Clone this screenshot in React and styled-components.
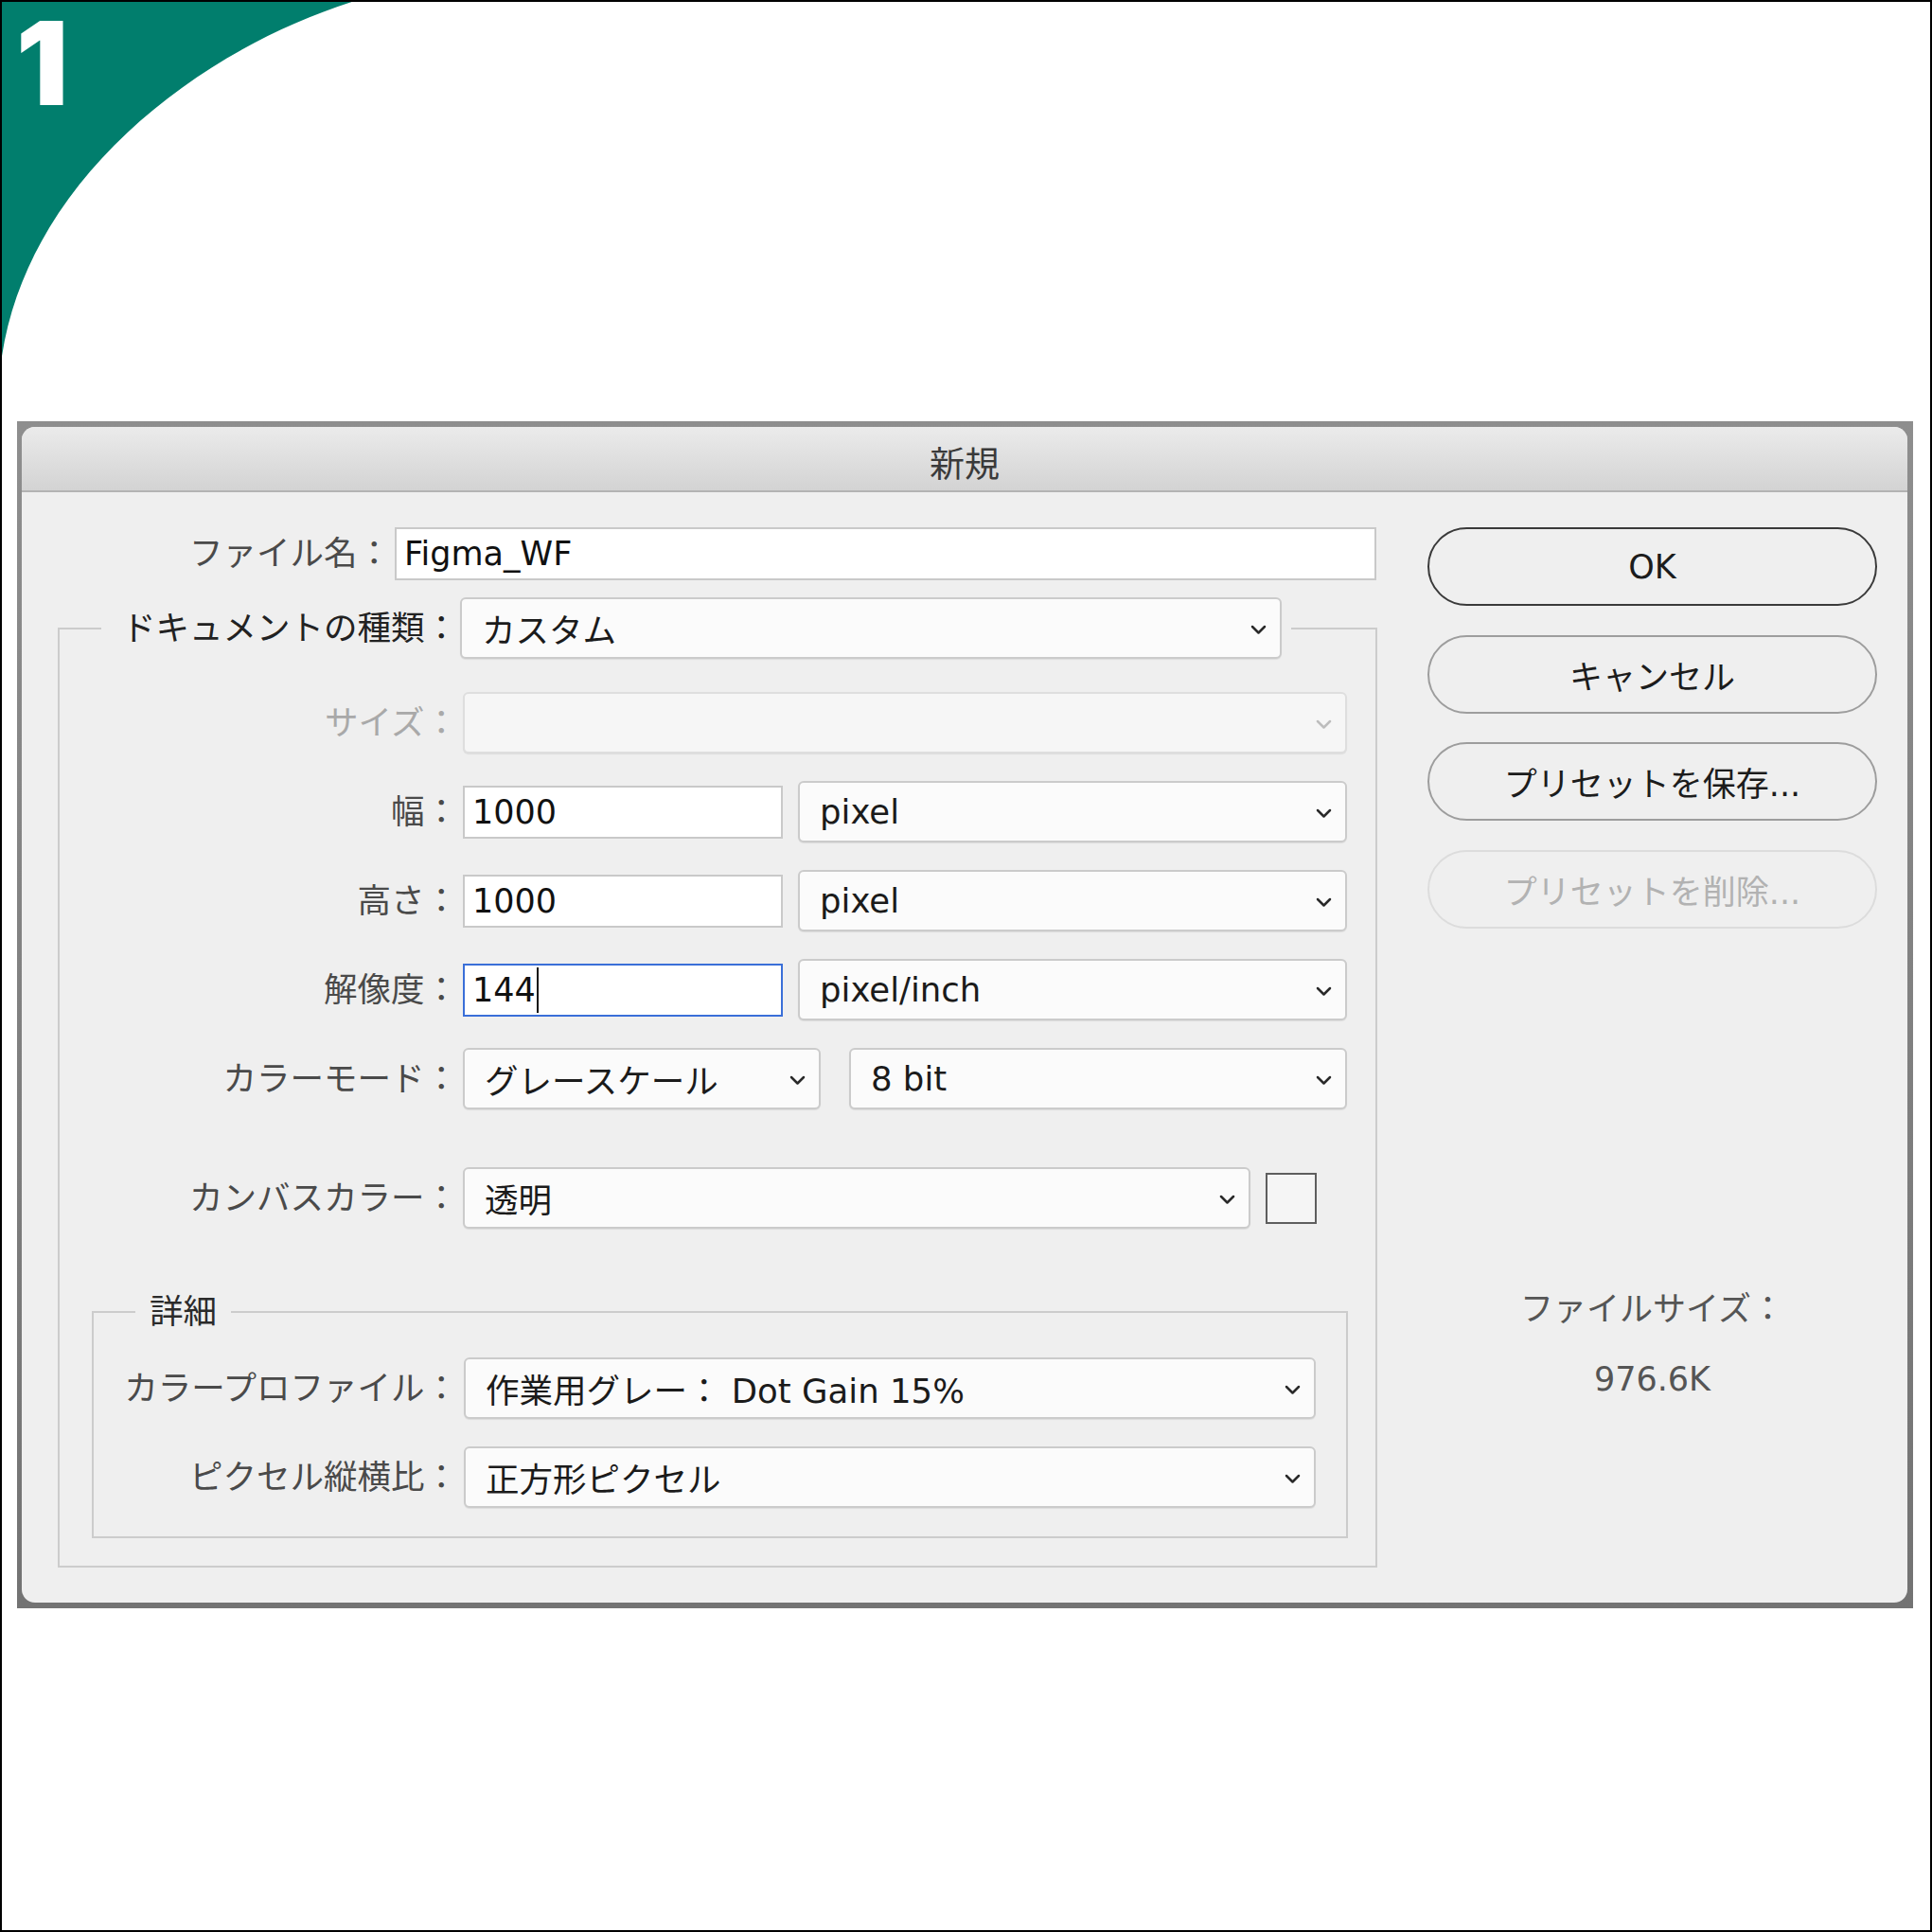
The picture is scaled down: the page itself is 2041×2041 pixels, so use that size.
import React from 'react';
import styled, { createGlobalStyle } from 'styled-components';

const GlobalStyle = createGlobalStyle`
  html, body { margin: 0; padding: 0; background: #fff; }
  body { font-family: "DejaVu Sans", "Noto Sans CJK JP", sans-serif; }
  * { box-sizing: border-box; }
`;

const Page = styled.div`
  position: relative;
  width: 2041px;
  height: 2041px;
  border: 2px solid #000;
  background: #fff;
  padding: 443px 18px 0 16px;
  overflow: hidden;
`;

const Corner = styled.svg`
  position: absolute;
  top: -2px;
  left: -2px;
  width: 400px;
  height: 400px;
  display: block;
`;

const StepNumber = styled.span`
  position: absolute;
  top: 20px;
  left: 15px;
  font-family: Inter, sans-serif;
  font-weight: 900;
  font-size: 122px;
  line-height: 90px;
  color: #fff;
`;

const Frame = styled.div`
  height: 1254px;
  padding: 6px 6px 6px 5px;
  background: linear-gradient(#8e8e8e, #737373);
`;

const Window = styled.div`
  height: 100%;
  border-radius: 14px;
  background: #efefef;
  overflow: hidden;
  display: flex;
  flex-direction: column;
`;

const TitleBar = styled.div`
  flex: none;
  height: 69px;
  display: flex;
  align-items: center;
  justify-content: center;
  padding-top: 6px;
  background: linear-gradient(#ebebeb, #d3d3d3);
  border-bottom: 2px solid #b3b3b3;
  font-size: 37px;
  color: #3a3a3a;
`;

const Body = styled.div`
  flex: 1;
  display: flex;
  gap: 53px;
  padding: 37px 32px 0 38px;
`;

const LeftColumn = styled.div`
  width: 1394px;
  display: flex;
  flex-direction: column;
`;

const RightColumn = styled.div`
  width: 475px;
  display: flex;
  flex-direction: column;
  gap: 30.5px;
`;

const Row = styled.div`
  display: flex;
  align-items: center;
  height: ${p => p.$h || 65}px;
  margin-top: ${p => p.$mt || 0}px;
`;

const Label = styled.span`
  flex: none;
  width: ${p => p.$w}px;
  margin-right: ${p => p.$gap ?? 5}px;
  text-align: right;
  font-size: 35.5px;
  line-height: 44px;
  white-space: nowrap;
  color: ${p => (p.$disabled ? '#a9a9a9' : p.$strong ? '#222' : '#4a4a4a')};
`;

const TextField = styled.div`
  flex: none;
  width: ${p => p.$w}px;
  height: 56px;
  display: flex;
  align-items: center;
  padding-left: 8px;
  background: #fff;
  border: 2px solid ${p => (p.$focused ? '#3a6fd8' : '#c9c9c9')};
  font-size: 35px;
  color: #111;
  white-space: nowrap;
`;

const Caret = styled.span`
  display: inline-block;
  width: 2px;
  height: 48px;
  margin-left: 1px;
  background: #111;
`;

const SelectBox = styled.div`
  flex: ${p => (p.$w ? 'none' : '1')};
  width: ${p => (p.$w ? `${p.$w}px` : 'auto')};
  height: 65px;
  display: flex;
  align-items: center;
  justify-content: space-between;
  padding: 0 14px 0 21px;
  background: ${p => (p.$disabled ? '#f6f6f6' : '#fbfbfb')};
  border: 2px solid ${p => (p.$disabled ? '#dedede' : '#cbcbcb')};
  border-radius: 6px;
  box-shadow: 0 1px 1px rgba(0, 0, 0, 0.08);
  font-size: 35.5px;
  color: #1b1b1b;
  white-space: nowrap;
`;

const ChevronIcon = styled.svg`
  flex: none;
  width: 17px;
  height: 11px;
  margin-top: 4px;
  fill: none;
  stroke: ${p => (p.$disabled ? '#bdbdbd' : '#2a2a2a')};
  stroke-width: 2.5;
  stroke-linecap: round;
  stroke-linejoin: round;
`;

const Group = styled.fieldset`
  margin: ${p => p.$mt || 0}px 0 0 ${p => p.$ml || 0}px;
  width: ${p => p.$w}px;
  min-inline-size: 0;
  border: 2px solid #cccccc;
  padding: ${p => p.$pad};
`;

const GroupLegend = styled.legend`
  margin-left: ${p => p.$ml}px;
  padding: ${p => p.$pad};
`;

const LegendRow = styled.div`
  display: flex;
  align-items: center;
  height: ${p => p.$h}px;
`;

const LegendText = styled.span`
  font-size: 35.5px;
  line-height: 44px;
  color: #2b2b2b;
`;

const Rows = styled.div`
  display: flex;
  flex-direction: column;
  gap: ${p => p.$gap}px;
`;

const Controls = styled.div`
  flex: 1;
  display: flex;
  align-items: center;
  gap: ${p => p.$gap || 16}px;
`;

const Swatch = styled.div`
  flex: none;
  width: 54px;
  height: 54px;
  border: 2px solid #5e5e5e;
  background: #f5f5f5;
`;

const Button = styled.div`
  height: 83px;
  border-radius: 42px;
  display: flex;
  align-items: center;
  justify-content: center;
  border: 2px solid
    ${p => (p.$kind === 'default' ? '#3a3a3a' : p.$kind === 'disabled' ? '#dcdcdc' : '#9d9d9d')};
  font-size: 35px;
  color: ${p => (p.$kind === 'disabled' ? '#b2b2b2' : '#1c1c1c')};
`;

const FileInfo = styled.div`
  margin-top: 350px;
  display: flex;
  flex-direction: column;
  align-items: center;
  gap: 30px;
  font-size: 35px;
  line-height: 44px;
  color: #555;
`;

function Chevron({ disabled }) {
  return (
    <ChevronIcon viewBox="0 0 17 11" $disabled={disabled}>
      <polyline points="2,2 8.5,8.5 15,2" />
    </ChevronIcon>
  );
}

function Select({ value, w, disabled }) {
  return (
    <SelectBox $w={w} $disabled={disabled}>
      <span>{value}</span>
      <Chevron disabled={disabled} />
    </SelectBox>
  );
}

export default function App() {
  return (
    <>
      <GlobalStyle />
      <Page>
        <Corner viewBox="0 0 400 400">
          <path d="M0 0 H378 C200 55 20 200 0 392 Z" fill="#017e6d" />
        </Corner>
        <StepNumber>1</StepNumber>

        <Frame>
          <Window>
            <TitleBar>新規</TitleBar>
            <Body>
              <LeftColumn>
                <Row $h={56}>
                  <Label $w={352} $gap={4}>ファイル名：</Label>
                  <TextField $w={1037}>Figma_WF</TextField>
                </Row>

                <Group $w={1394} $mt={18} $pad="35px 30px 29px 0">
                  <GroupLegend $ml={44} $pad="0 10px 0 0">
                    <LegendRow $h={65}>
                      <Label $w={377} $gap={2} $strong>ドキュメントの種類：</Label>
                      <Select value="カスタム" w={868} />
                    </LegendRow>
                  </GroupLegend>

                  <Rows $gap={29}>
                    <Row>
                      <Label $w={421} $disabled>サイズ：</Label>
                      <Select value="" disabled />
                    </Row>
                    <Row>
                      <Label $w={421}>幅：</Label>
                      <Controls>
                        <TextField $w={338}>1000</TextField>
                        <Select value="pixel" />
                      </Controls>
                    </Row>
                    <Row>
                      <Label $w={421}>高さ：</Label>
                      <Controls>
                        <TextField $w={338}>1000</TextField>
                        <Select value="pixel" />
                      </Controls>
                    </Row>
                    <Row>
                      <Label $w={421}>解像度：</Label>
                      <Controls>
                        <TextField $w={338} $focused>
                          144<Caret />
                        </TextField>
                        <Select value="pixel/inch" />
                      </Controls>
                    </Row>
                    <Row>
                      <Label $w={421}>カラーモード：</Label>
                      <Controls $gap={30}>
                        <Select value="グレースケール" w={378} />
                        <Select value="8 bit" />
                      </Controls>
                    </Row>
                    <Row $mt={32}>
                      <Label $w={421}>カンバスカラー：</Label>
                      <Controls>
                        <Select value="透明" w={832} />
                        <Swatch />
                      </Controls>
                    </Row>

                    <Group $w={1327} $ml={34} $mt={37} $pad="26px 32px 30px 0">
                      <GroupLegend $ml={44} $pad="0 15px">
                        <LegendText>詳細</LegendText>
                      </GroupLegend>
                      <Rows $gap={29}>
                        <Row>
                          <Label $w={385} $gap={6}>カラープロファイル：</Label>
                          <Select value="作業用グレー：  Dot Gain 15%" />
                        </Row>
                        <Row>
                          <Label $w={385} $gap={6}>ピクセル縦横比：</Label>
                          <Select value="正方形ピクセル" />
                        </Row>
                      </Rows>
                    </Group>
                  </Rows>
                </Group>
              </LeftColumn>

              <RightColumn>
                <Button $kind="default">OK</Button>
                <Button>キャンセル</Button>
                <Button>プリセットを保存...</Button>
                <Button $kind="disabled">プリセットを削除...</Button>
                <FileInfo>
                  <span>ファイルサイズ：</span>
                  <span>976.6K</span>
                </FileInfo>
              </RightColumn>
            </Body>
          </Window>
        </Frame>
      </Page>
    </>
  );
}
